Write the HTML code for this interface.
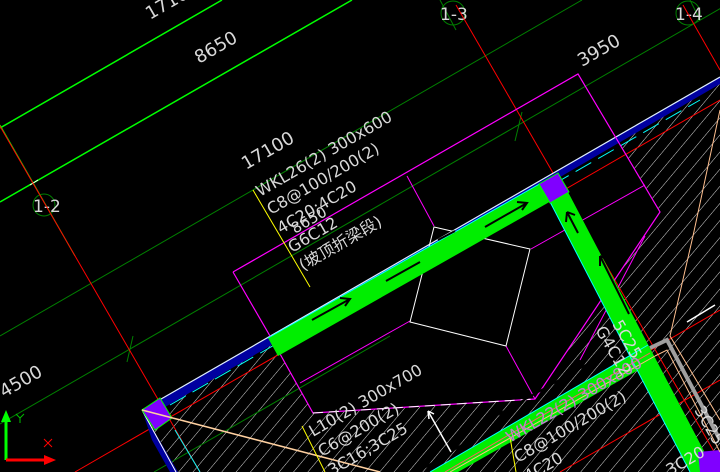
<!DOCTYPE html>
<html><head><meta charset="utf-8"><style>
html,body{margin:0;padding:0;background:#000;}
svg{display:block}
text{font-family:"DejaVu Sans","Liberation Sans","Noto Sans CJK SC",sans-serif;fill:#d8d8d8;}
</style></head><body>
<svg width="720" height="472" viewBox="0 0 720 472" xmlns="http://www.w3.org/2000/svg">
<defs>
<pattern id="h" width="11" height="11" patternUnits="userSpaceOnUse" patternTransform="rotate(40)">
<line x1="0" y1="0" x2="0" y2="11" stroke="#d8d8d8" stroke-width="1"/>
</pattern>
<clipPath id="c"><polygon points="142,410 720,77 720,472 178,472"/></clipPath>
</defs>
<rect width="720" height="472" fill="#000"/>
<rect width="720" height="472" fill="url(#h)" clip-path="url(#c)"/>
<polygon points="233,272 578,74 660,212 535,399 313,413 270,336" fill="#000"/>
<line x1="0" y1="128" x2="222" y2="0" stroke="#00ff00" stroke-width="1.5"/>
<line x1="0" y1="202" x2="352" y2="0" stroke="#00ff00" stroke-width="1.5"/>
<line x1="0" y1="125" x2="75" y2="256" stroke="#00ff00" stroke-width="1"/>
<line x1="0" y1="336" x2="582" y2="0" stroke="#008000" stroke-width="1"/>
<line x1="0" y1="424" x2="735" y2="0" stroke="#008000" stroke-width="1"/>
<line x1="154" y1="472" x2="390" y2="336" stroke="#008000" stroke-width="1"/>
<line x1="440" y1="0" x2="456" y2="30" stroke="#008000" stroke-width="1"/>
<line x1="690" y1="0" x2="700" y2="20" stroke="#008000" stroke-width="1"/>
<line x1="127" y1="362" x2="133" y2="336" stroke="#008000"/>
<line x1="515" y1="141" x2="522" y2="112" stroke="#008000"/>
<line x1="30" y1="185" x2="38" y2="180" stroke="#fff"/>
<circle cx="44" cy="205" r="11" fill="none" stroke="#008000"/>
<circle cx="453" cy="13" r="12" fill="none" stroke="#008000"/>
<circle cx="688" cy="13" r="12" fill="none" stroke="#008000"/>
<text x="33" y="212" font-size="17">1-2</text>
<text x="440" y="20" font-size="17">1-3</text>
<text x="675" y="20" font-size="17">1-4</text>
<line x1="-73" y1="0" x2="200" y2="472" stroke="#ff0000" stroke-width="1"/>
<line x1="456" y1="5" x2="720" y2="462" stroke="#ff0000" stroke-width="1"/>
<line x1="683" y1="5" x2="720" y2="70" stroke="#ff0000" stroke-width="1"/>
<line x1="75" y1="472" x2="720" y2="100" stroke="#ff0000" stroke-width="1"/>
<line x1="440" y1="472" x2="720" y2="310" stroke="#ff0000" stroke-width="1"/>
<line x1="560" y1="472" x2="720" y2="380" stroke="#ff0000" stroke-width="1"/>
<line x1="170" y1="405" x2="700" y2="100" stroke="#00ffff" stroke-width="1" stroke-dasharray="18,8"/>
<line x1="175" y1="430" x2="200" y2="472" stroke="#00ffff" stroke-width="1"/>
<polygon points="142,410 720,77 720,84 160,410" fill="#0000a0"/>
<line x1="142" y1="410" x2="720" y2="77" stroke="#e0f0ff" stroke-width="1.2"/>
<polygon points="142,410 178,472 170,472 152,440" fill="#0000a0"/>
<line x1="142" y1="410" x2="176" y2="472" stroke="#fff" stroke-width="1"/>
<polyline points="233,272 578,74 660,212 535,399 313,413 270,336 233,272" fill="none" stroke="#ff00ff" stroke-width="1.2"/>
<polyline points="407,176 434,226" fill="none" stroke="#ff00ff"/>
<line x1="410" y1="321" x2="300" y2="383" stroke="#ff00ff"/>
<line x1="531" y1="249" x2="645" y2="185" stroke="#ff00ff"/>
<line x1="506" y1="346" x2="535" y2="399" stroke="#ff00ff"/>
<line x1="645" y1="236" x2="580" y2="360" stroke="#ff00ff"/>
<line x1="313" y1="413" x2="535" y2="399" stroke="#fff" stroke-width="1" stroke-dasharray="10,6"/>
<polygon points="434,227 530,249 506,346 410,322" fill="none" stroke="#fff" stroke-width="1"/>
<polygon points="268,338 550,178 560,196 278,356" fill="#00ee00"/>
<polygon points="548,198 568,192 715,472 690,472" fill="#00ee00"/>
<polygon points="430,472 648,345 656,360 458,472" fill="#00ee00"/>
<line x1="268" y1="338" x2="550" y2="178" stroke="#00ffff" stroke-width="1"/>
<line x1="548" y1="198" x2="690" y2="472" stroke="#00ffff" stroke-width="1"/>
<line x1="430" y1="472" x2="648" y2="345" stroke="#00ffff" stroke-width="1"/>
<line x1="445" y1="472" x2="650" y2="353" stroke="#ff6060" stroke-width="1"/>
<line x1="450" y1="472" x2="655" y2="356" stroke="#ffc080" stroke-width="1"/>
<g stroke="#000" stroke-width="2" fill="none">
<path d="M312,320 L350,299 M340,298 L350,299 L345,306"/>
<path d="M386,281 L420,262"/>
<path d="M485,227 L527,203 M517,202 L527,203 L522,210"/>
<path d="M438,240 L455,231"/>
<path d="M567,212 L578,233 M567,212 L566,222 M567,212 L575,215"/>
<path d="M600,256 L629,314 M600,256 L600,266 M600,256 L609,260"/>
<path d="M485,422 L600,357"/>
<path d="M388,490 L470,440"/>
</g>
<polygon points="539,184 558,173 569,192 550,203" fill="#8000ff" stroke="#00ff00" stroke-width="1"/>
<polygon points="142,410 160,398 172,418 155,430" fill="#8000ff" stroke="#00ff00" stroke-width="1"/>
<polygon points="698,452 720,450 720,472 700,472" fill="#8000ff"/>
<line x1="142" y1="410" x2="380" y2="472" stroke="#ffd0a0" stroke-width="1.5"/>
<polyline points="720,110 693,236 670,336 720,420" fill="none" stroke="#ffc090" stroke-width="1"/>
<polyline points="650,348 667,340 720,440" fill="none" stroke="#a0a0a0" stroke-width="4"/>
<polyline points="655,356 667,350 720,452" fill="none" stroke="#ffc090" stroke-width="1"/>
<line x1="253" y1="190" x2="310" y2="287" stroke="#ffff00"/>
<line x1="302" y1="426" x2="325" y2="472" stroke="#ffff00"/>
<line x1="510" y1="437" x2="516" y2="472" stroke="#ffff00"/>
<line x1="451" y1="452" x2="428" y2="411" stroke="#fff" stroke-width="1.5"/>
<path d="M428,411 L429,419 M428,411 L434,414" stroke="#fff" stroke-width="1.5"/>
<line x1="687" y1="322" x2="715" y2="305" stroke="#fff" stroke-width="1.5"/>
<g font-size="18">
<text transform="translate(150,20) rotate(-30)">17100</text>
<text transform="translate(199,64) rotate(-30)">8650</text>
<text transform="translate(582,67) rotate(-30)">3950</text>
<text transform="translate(246,170) rotate(-30)">17100</text>
<text transform="translate(4,398) rotate(-30)">4500</text>
</g>
<g font-size="16">
<text transform="translate(260,197) rotate(-30)">WKL26(2) 300x600</text>
<text transform="translate(271,215) rotate(-30)">C8@100/200(2)</text>
<text transform="translate(281,234) rotate(-30)">4C20;4C20</text>
<text transform="translate(295,234) rotate(-30)" font-size="15">8650</text>
<text transform="translate(292,253) rotate(-30)">G6C12</text>
<text transform="translate(303,271) rotate(-30)">(坡顶折梁段)</text>
<text transform="translate(313,437) rotate(-30)">L10(2) 300x700</text>
<text transform="translate(322,457) rotate(-30)">C6@200(2)</text>
<text transform="translate(332,476) rotate(-30)">3C16;3C25</text>
<text transform="translate(510,443) rotate(-30)" style="fill:#c080d0">WKL22(2) 300x800</text>
<text transform="translate(518,463) rotate(-30)">C8@100/200(2)</text>
<text transform="translate(528,482) rotate(-30)">4C20</text>
<text transform="translate(612,324) rotate(60)">5C25</text>
<text transform="translate(595,330) rotate(60)">G4C12</text>
<text transform="translate(694,410) rotate(60)">3C25</text>
<text transform="translate(670,476) rotate(-30)">3C20</text>
</g>
<line x1="6" y1="460" x2="6" y2="420" stroke="#00ff00" stroke-width="3"/>
<polygon points="1,422 11,422 6,410" fill="#00ff00"/>
<line x1="6" y1="460" x2="46" y2="460" stroke="#ff0000" stroke-width="3"/>
<polygon points="44,455 44,465 56,460" fill="#ff0000"/>
<path d="M16,414 L20,418 L24,414 M20,418 L20,423" stroke="#00c000" fill="none"/>
<path d="M44,439 L52,447 M52,439 L44,447" stroke="#ff0000" fill="none"/>
</svg>
</body></html>
